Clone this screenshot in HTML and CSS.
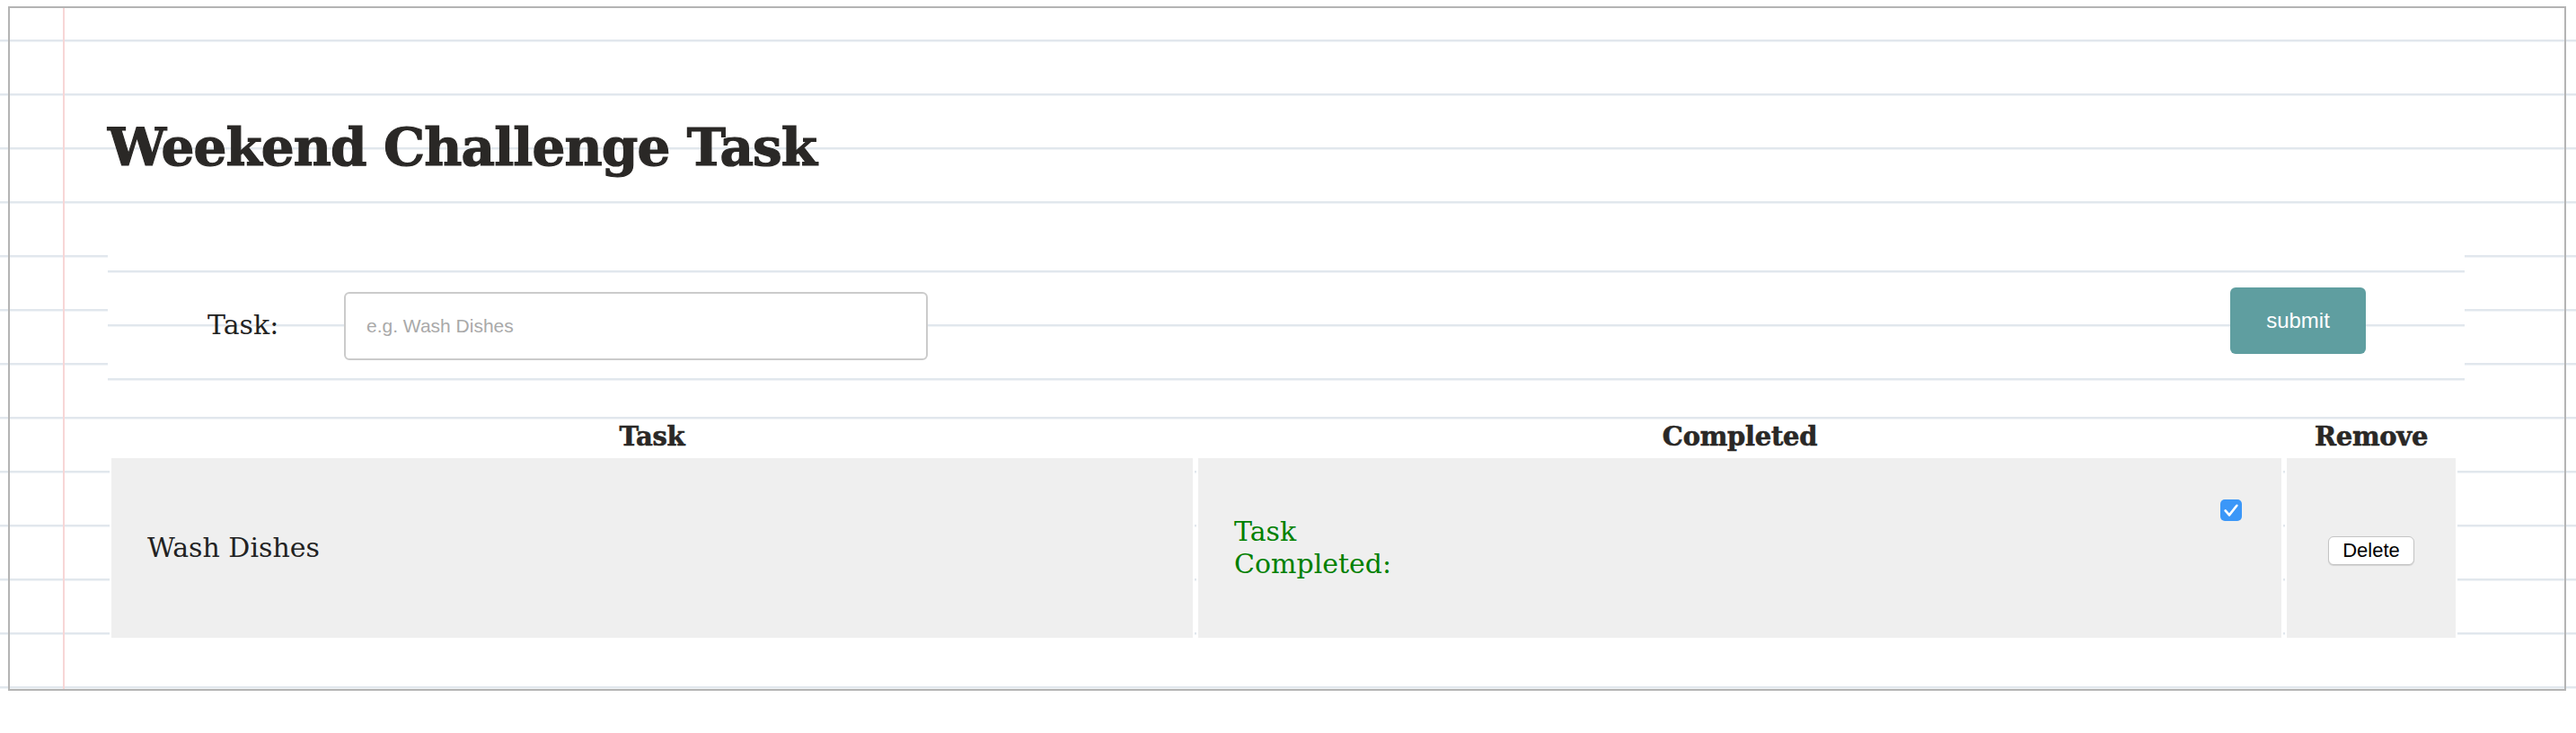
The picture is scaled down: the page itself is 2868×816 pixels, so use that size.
FILE: index.html
```html
<!DOCTYPE html>
<html lang="en">
<head>
<meta charset="utf-8">
<title>Weekend Challenge Task</title>
<link rel="stylesheet" href="styles.css">
</head>
<body>
<div class="frame">
  <h1 class="title">Weekend Challenge Task</h1>
  <form class="task-form">
    <label class="task-label" for="task">Task:</label>
    <input id="task" class="task-input" type="text" placeholder="e.g. Wash Dishes">
    <button type="button" class="submit-btn">submit</button>
  </form>
  <table class="tasks">
    <colgroup><col class="col-task"><col class="col-done"><col class="col-remove"></colgroup>
    <thead>
      <tr><th>Task</th><th>Completed</th><th>Remove</th></tr>
    </thead>
    <tbody>
      <tr>
        <td class="cell-name">Wash Dishes</td>
        <td class="cell-done">
          <div class="done-wrap">
            <span class="done-label">Task Completed:</span>
            <span class="check" role="checkbox" aria-checked="true"><svg width="24" height="24" viewBox="0 0 24 24"><rect x="0" y="0" width="24" height="24" rx="5" fill="#3b97f8"/><path d="M5.6 12.4 L10 17.4 L18.4 6.8" fill="none" stroke="#fff" stroke-width="2.6" stroke-linecap="round" stroke-linejoin="round"/></svg></span>
          </div>
        </td>
        <td class="cell-remove"><button type="button" class="delete-btn">Delete</button></td>
      </tr>
    </tbody>
  </table>
</div>
</body>
</html>
```
FILE: styles.css
```css
html, body {
  margin: 0;
  padding: 0;
}

body {
  min-height: 816px;
  background-color: #fff;
  background-image: linear-gradient(to bottom,
    transparent 0, transparent 44px,
    #e1e7ed 44px, #e1e7ed 46px,
    #f1f4f7 46px, #f1f4f7 47px,
    transparent 47px);
  background-size: 100% 60px;
  font-family: "DejaVu Serif", serif;
  color: #2a2826;
}

.frame {
  box-sizing: border-box;
  height: 762px;
  margin: 7px 11px 0 9px;
  border: 2px solid #b4b4b4;
  padding: 0 111px 0 109px;
  background-image: linear-gradient(to right,
    transparent 0, transparent 59px,
    #f7d6d6 59px, #f7d6d6 61px,
    transparent 61px);
  background-repeat: no-repeat;
  overflow: hidden;
}

.title {
  margin: 121px 0 0;
  font-family: "DejaVu Serif", serif;
  font-size: 58px;
  line-height: 68px;
  font-weight: bold;
  letter-spacing: -0.9px;
  -webkit-text-stroke: 1.2px #2a2826;
  color: #2a2826;
}

.task-form {
  display: flex;
  align-items: flex-start;
  height: 180px;
  margin-top: 59px;
  background-color: #fff;
  background-image: linear-gradient(to bottom,
    transparent 0, transparent 44px,
    #e1e7ed 44px, #e1e7ed 46px,
    #f1f4f7 46px, #f1f4f7 47px,
    transparent 47px);
  background-size: 100% 60px;
}

.task-label {
  flex: none;
  width: 152px;
  margin: 87px 0 0 111px;
  font-size: 30px;
  line-height: 36px;
  color: #222;
}

.task-input {
  flex: none;
  box-sizing: border-box;
  width: 650px;
  height: 76px;
  margin-top: 68px;
  border: 2px solid #cbcbcb;
  border-radius: 6px;
  padding: 0 23px;
  background: #fff;
  font-family: "Liberation Sans", Arial, sans-serif;
  font-size: 21px;
  color: #333;
  outline: none;
}

.task-input::placeholder {
  color: #a9a9a9;
}

.submit-btn {
  flex: none;
  width: 151px;
  height: 74px;
  margin: 63px 110px 0 auto;
  border: 0;
  border-radius: 6px;
  background: #5f9ea0;
  color: #fff;
  font-family: "Liberation Sans", Arial, sans-serif;
  font-size: 24px;
  padding: 0;
}

.tasks {
  width: calc(100% - 6px);
  margin-top: 29px;
  border-collapse: separate;
  border-spacing: 2px;
  table-layout: fixed;
}

.col-task {
  width: 1208px;
}

.col-remove {
  width: 192px;
}

.tasks th {
  padding: 0 0 2px;
  font-family: "DejaVu Serif", serif;
  font-size: 29px;
  line-height: 36px;
  font-weight: bold;
  letter-spacing: -0.3px;
  -webkit-text-stroke: 0.6px #2a2826;
  text-align: center;
  color: #2a2826;
}

.tasks td {
  height: 200px;
  padding: 0 40px;
  border: 2px solid #fff;
  background: #efefef;
  vertical-align: middle;
  font-size: 30px;
  line-height: 36px;
  color: #222;
}

.done-wrap {
  display: flex;
  align-items: flex-start;
  padding-bottom: 18px;
}

.done-label {
  width: 180px;
  margin-top: 18px;
  color: #008000;
}

.check {
  display: block;
  width: 24px;
  height: 24px;
  margin-left: auto;
  margin-right: 4px;
}

.check svg {
  display: block;
}

.tasks td.cell-remove {
  padding: 0;
  text-align: center;
}

.delete-btn {
  width: 96px;
  height: 32px;
  padding: 0;
  border: 1px solid #c4c4c4;
  border-radius: 6px;
  background: #fff;
  box-shadow: 0 1px 1px rgba(0, 0, 0, 0.12);
  font-family: "Liberation Sans", Arial, sans-serif;
  font-size: 22px;
  color: #000;
}
```
